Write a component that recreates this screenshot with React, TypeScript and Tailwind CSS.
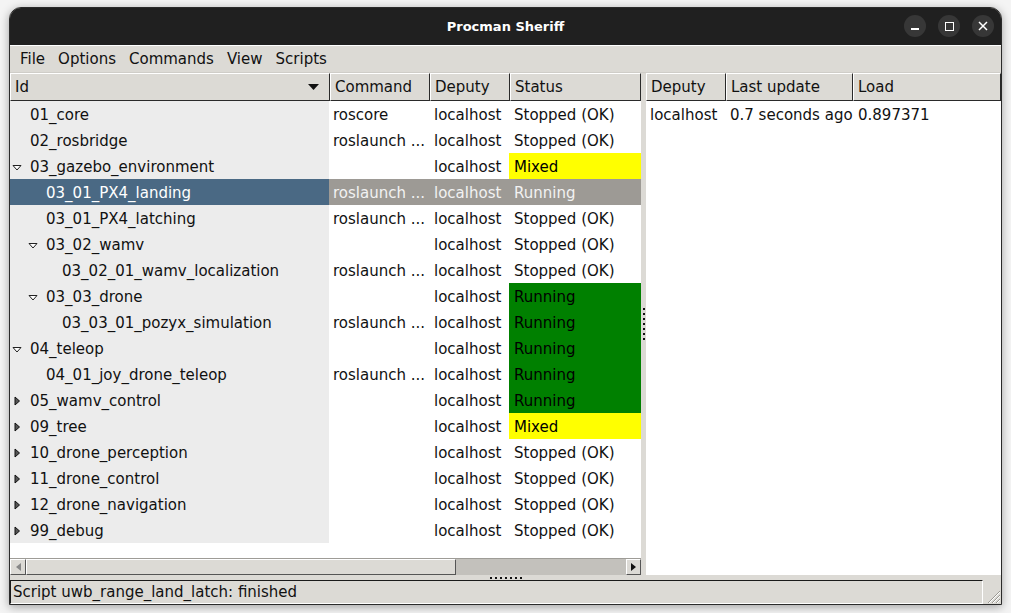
import React from "react";

type Row = {
    id: string;
    level: number;
    exp?: "open" | "closed";
    cmd?: string;
    status: string;
    color?: "yellow" | "green";
    selected?: boolean;
};

const rows: Row[] = [
    { id: "01_core", level: 0, cmd: "roscore", status: "Stopped (OK)" },
    { id: "02_rosbridge", level: 0, cmd: "roslaunch ...", status: "Stopped (OK)" },
    { id: "03_gazebo_environment", level: 0, exp: "open", status: "Mixed", color: "yellow" },
    { id: "03_01_PX4_landing", level: 1, cmd: "roslaunch ...", status: "Running", selected: true },
    { id: "03_01_PX4_latching", level: 1, cmd: "roslaunch ...", status: "Stopped (OK)" },
    { id: "03_02_wamv", level: 1, exp: "open", status: "Stopped (OK)" },
    { id: "03_02_01_wamv_localization", level: 2, cmd: "roslaunch ...", status: "Stopped (OK)" },
    { id: "03_03_drone", level: 1, exp: "open", status: "Running", color: "green" },
    { id: "03_03_01_pozyx_simulation", level: 2, cmd: "roslaunch ...", status: "Running", color: "green" },
    { id: "04_teleop", level: 0, exp: "open", status: "Running", color: "green" },
    { id: "04_01_joy_drone_teleop", level: 1, cmd: "roslaunch ...", status: "Running", color: "green" },
    { id: "05_wamv_control", level: 0, exp: "closed", status: "Running", color: "green" },
    { id: "09_tree", level: 0, exp: "closed", status: "Mixed", color: "yellow" },
    { id: "10_drone_perception", level: 0, exp: "closed", status: "Stopped (OK)" },
    { id: "11_drone_control", level: 0, exp: "closed", status: "Stopped (OK)" },
    { id: "12_drone_navigation", level: 0, exp: "closed", status: "Stopped (OK)" },
    { id: "99_debug", level: 0, exp: "closed", status: "Stopped (OK)" },
];

// tree indentation per depth (16px a level)
const indent = ["pl-[2px]", "pl-[18px]", "pl-[34px]"];

const Expander = ({ kind }: { kind: "open" | "closed" }) =>
    kind === "open" ? (
        <svg width="10" height="7" viewBox="0 0 10 7">
            <path d="M1 1.5 L9 1.5 L5 6 Z" fill="#fff" stroke="#222" strokeWidth="1" />
        </svg>
    ) : (
        <svg width="10" height="10" viewBox="0 0 10 10">
            <path d="M3 1 L7.5 5 L3 9 Z" fill="#555" stroke="#111" strokeWidth="1" />
        </svg>
    );

const HeaderCell = ({ label, className, arrow }: { label: string; className: string; arrow?: boolean }) => (
    <div
        className={`flex items-center h-full border-t border-l border-t-white border-l-white border-r border-b border-r-[#2a2a2a] border-b-[#2a2a2a] pl-[4px] pr-[10px] ${className}`}
    >
        <span className="flex-1 truncate">{label}</span>
        {arrow && (
            <svg width="11" height="6" viewBox="0 0 11 6">
                <path d="M0 0 L11 0 L5.5 6 Z" fill="#111" />
            </svg>
        )}
    </div>
);

const SashDots = ({ vertical }: { vertical?: boolean }) => (
    <div className={vertical ? "flex flex-col gap-[3px]" : "flex flex-row gap-[3px]"}>
        {Array.from({ length: 7 }).map((_, i) => (
            <div key={i} className="w-[2px] h-[2px] bg-[#111]" />
        ))}
    </div>
);

export default function App() {
    return (
        <div
            className="w-[1011px] h-[613px] bg-[#f4f4f4] pt-[7px] pl-[9px] text-[15px] text-[#111]"
            style={{ fontFamily: '"DejaVu Sans", "Liberation Sans", sans-serif' }}
        >
            <div className="w-[993px] h-[598px] flex flex-col rounded-t-[12px] overflow-hidden shadow-[0_2px_10px_rgba(0,0,0,0.35)] border border-[#2b2b2b] bg-[#dcdad5]">
                {/* title bar */}
                <div className="h-[37px] shrink-0 bg-[#202020] flex items-center relative">
                    <div className="flex-1 text-center text-white font-bold text-[13px]">Procman Sheriff</div>
                    <div className="absolute right-[7px] top-[7px] flex gap-[12px]">
                        <div className="w-[22px] h-[22px] rounded-full bg-[#373737] flex items-center justify-center">
                            <div className="w-[8px] h-[1.5px] bg-white mt-[6px]" />
                        </div>
                        <div className="w-[22px] h-[22px] rounded-full bg-[#373737] flex items-center justify-center">
                            <div className="w-[9px] h-[9px] border-[1.5px] border-white" />
                        </div>
                        <div className="w-[22px] h-[22px] rounded-full bg-[#373737] flex items-center justify-center">
                            <svg width="10" height="10" viewBox="0 0 10 10">
                                <path d="M1 1 L9 9 M9 1 L1 9" stroke="#fff" strokeWidth="1.5" />
                            </svg>
                        </div>
                    </div>
                </div>

                {/* menu bar */}
                <div className="h-[28px] shrink-0 flex items-center pl-[10px] gap-[13px] border-t border-white border-b border-b-[#cfcdc8]">
                    <span>File</span>
                    <span>Options</span>
                    <span>Commands</span>
                    <span>View</span>
                    <span>Scripts</span>
                </div>

                {/* panes */}
                <div className="flex-1 flex flex-row min-h-0">
                    {/* left tree pane */}
                    <div className="w-[631px] flex flex-col bg-white">
                        <div className="h-[28px] shrink-0 flex bg-[#dcdad5]">
                            <HeaderCell label="Id" className="w-[320px]" arrow />
                            <HeaderCell label="Command" className="w-[100px]" />
                            <HeaderCell label="Deputy" className="w-[80px]" />
                            <HeaderCell label="Status" className="flex-1" />
                        </div>
                        <div className="flex flex-col">
                            {rows.map((r) => (
                                <div key={r.id} className="h-[26px] flex flex-row">
                                    <div
                                        className={`w-[319px] flex items-center pt-[2px] ${indent[r.level]} ${
                                            r.selected ? "bg-[#4a6984] text-white" : "bg-[#ececec]"
                                        }`}
                                    >
                                        <div className="w-[18px] shrink-0 flex items-center">
                                            {r.exp && <Expander kind={r.exp} />}
                                        </div>
                                        <span className="whitespace-nowrap">{r.id}</span>
                                    </div>
                                    <div
                                        className={`w-[100px] flex items-center pt-[2px] pl-[4px] whitespace-nowrap overflow-hidden ${
                                            r.selected ? "bg-[#9d9a95] text-[#f2f2f2]" : ""
                                        }`}
                                    >
                                        {r.cmd ?? ""}
                                    </div>
                                    <div
                                        className={`w-[80px] flex items-center pt-[2px] pl-[5px] ${
                                            r.selected ? "bg-[#9d9a95] text-[#f2f2f2]" : ""
                                        }`}
                                    >
                                        localhost
                                    </div>
                                    <div
                                        className={`flex-1 flex items-center pt-[2px] pl-[5px] ${
                                            r.selected
                                                ? "bg-[#9d9a95] text-[#f2f2f2]"
                                                : r.color === "yellow"
                                                  ? "bg-[#ffff00] text-black"
                                                  : r.color === "green"
                                                    ? "bg-[#008000] text-black"
                                                    : ""
                                        }`}
                                    >
                                        {r.status}
                                    </div>
                                </div>
                            ))}
                        </div>
                        <div className="flex-1" />
                        {/* horizontal scrollbar */}
                        <div className="h-[17px] shrink-0 flex bg-[#c3c1bc] border-t border-[#9e9c97]">
                            <div className="w-[16px] bg-[#dcdad5] border border-t-white border-l-white border-r-[#555] border-b-[#555] flex items-center justify-center">
                                <svg width="5" height="8" viewBox="0 0 5 8">
                                    <path d="M5 0 L0 4 L5 8 Z" fill="#888" />
                                </svg>
                            </div>
                            <div className="w-[430px] bg-[#dcdad5] border border-t-white border-l-white border-r-[#555] border-b-[#555]" />
                            <div className="flex-1" />
                            <div className="w-[15px] bg-[#dcdad5] border border-t-white border-l-white border-r-[#555] border-b-[#555] flex items-center justify-center">
                                <svg width="5" height="8" viewBox="0 0 5 8">
                                    <path d="M0 0 L5 4 L0 8 Z" fill="#111" />
                                </svg>
                            </div>
                        </div>
                    </div>

                    {/* vertical sash */}
                    <div className="w-[5px] shrink-0 flex flex-col items-center justify-center">
                        <SashDots vertical />
                    </div>

                    {/* right deputy pane */}
                    <div className="flex-1 flex flex-col bg-white">
                        <div className="h-[28px] shrink-0 flex bg-[#dcdad5]">
                            <HeaderCell label="Deputy" className="w-[80px]" />
                            <HeaderCell label="Last update" className="w-[127px]" />
                            <HeaderCell label="Load" className="flex-1" />
                        </div>
                        <div className="h-[26px] flex items-center pt-[2px]">
                            <span className="w-[80px] pl-[4px]">localhost</span>
                            <span className="w-[127px] pl-[4px]">0.7 seconds ago</span>
                            <span className="pl-[5px]">0.897371</span>
                        </div>
                    </div>
                </div>

                {/* horizontal sash */}
                <div className="h-[5px] shrink-0 flex items-center justify-center">
                    <SashDots />
                </div>

                {/* status bar */}
                <div className="h-[24px] shrink-0 flex flex-row">
                    <div className="flex-1 flex items-center pl-[2px] border-t border-l border-[#1a1a1a] border-b border-r border-b-white border-r-white">
                        Script uwb_range_land_latch: finished
                    </div>
                    <div className="w-[18px] flex items-end justify-end">
                        <svg width="16" height="16" viewBox="0 0 16 16">
                            <path d="M15 3 L3 15 M15 7 L7 15 M15 11 L11 15" stroke="#9a9892" strokeWidth="1" />
                            <path d="M15 4 L4 15 M15 8 L8 15 M15 12 L12 15" stroke="#fff" strokeWidth="1" />
                        </svg>
                    </div>
                </div>
            </div>
        </div>
    );
}
